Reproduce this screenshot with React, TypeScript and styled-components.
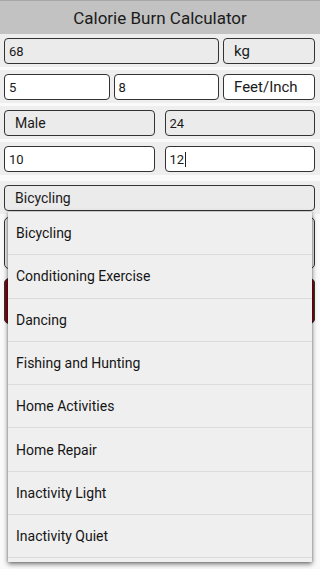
import React from "react";
import styled, { createGlobalStyle } from "styled-components";

const Global = createGlobalStyle`
  html, body { margin: 0; padding: 0; background: #fafafa; }
  body { font-family: Roboto, "Noto Sans", Arial, sans-serif; width: 320px; height: 569px; overflow: hidden; }
  * { box-sizing: border-box; }
`;

const Page = styled.div`
  position: relative;
  width: 320px;
  height: 569px;
  background: #fafafa;
  overflow: hidden;
`;

const Header = styled.div`
  height: 34px;
  background: #c2c2c2;
  border-top: 1px solid #a8a8a8;
  display: flex;
  align-items: center;
  justify-content: center;
  font-size: 17px;
  color: #1a1a1a;
`;

const Row = styled.div<{ $cols: string; $gap: number; $mt?: number }>`
  display: grid;
  grid-template-columns: ${(p) => p.$cols};
  column-gap: ${(p) => p.$gap}px;
  background: #eeeeee;
  padding: 4px 5px 3px 4px;
  margin-top: ${(p) => p.$mt ?? 3}px;
`;

const Field = styled.div<{ $filled?: boolean; $label?: boolean }>`
  height: 26px;
  border: 1.5px solid #333;
  border-radius: 4px;
  background: ${(p) => (p.$filled ? "#ebebeb" : "#ffffff")};
  display: flex;
  align-items: center;
  padding-left: ${(p) => (p.$label ? 10 : 4)}px;
  font-size: ${(p) => (p.$label ? 14 : 13)}px;
  color: #1a1a1a;
  white-space: nowrap;
`;

const Unit = styled(Field)`
  font-size: 15px;
`;

const Caret = styled.span`
  display: inline-block;
  width: 1px;
  height: 15px;
  background: #222;
  margin-left: 1px;
`;

const HiddenBox = styled.div`
  margin: 3px 5px 0 4px;
  height: 52px;
  border: 1.5px solid #333;
  border-radius: 5px;
  background: #eeeeee;
`;

const RedButton = styled.div`
  margin: 9px 5px 0 4px;
  height: 46px;
  border-radius: 5px;
  background: #7a0a12;
  border: 1.5px solid #333;
`;

const Dropdown = styled.div`
  position: absolute;
  left: 8px;
  top: 212px;
  width: 304px;
  height: 350px;
  background: #efefef;
  box-shadow: 0 2px 5px rgba(0, 0, 0, 0.55), 0 0 2px rgba(0, 0, 0, 0.25);
  overflow: hidden;
`;

const Item = styled.div`
  height: 43.3px;
  display: flex;
  align-items: center;
  padding-left: 8px;
  font-size: 14px;
  color: #151515;
  border-bottom: 1px solid #dcdcdc;
`;

const items = [
  "Bicycling",
  "Conditioning Exercise",
  "Dancing",
  "Fishing and Hunting",
  "Home Activities",
  "Home Repair",
  "Inactivity Light",
  "Inactivity Quiet",
];

export default function App() {
  return (
    <Page>
      <Global />
      <Header>Calorie Burn Calculator</Header>
      <Row $cols="1fr 92px" $gap={4} $mt={0}>
        <Field $filled>68</Field>
        <Unit $filled $label>kg</Unit>
      </Row>
      <Row $cols="1fr 1fr 92px" $gap={4}>
        <Field>5</Field>
        <Field>8</Field>
        <Unit $label>Feet/Inch</Unit>
      </Row>
      <Row $cols="1fr 1fr" $gap={10}>
        <Field $filled $label>Male</Field>
        <Field $filled>24</Field>
      </Row>
      <Row $cols="1fr 1fr" $gap={10}>
        <Field>10</Field>
        <Field>
          12<Caret />
        </Field>
      </Row>
      <Row $cols="1fr" $gap={0} $mt={6}>
        <Field $filled $label>Bicycling</Field>
      </Row>
      <HiddenBox />
      <RedButton />
      <Dropdown>
        {items.map((t) => (
          <Item key={t}>{t}</Item>
        ))}
        <Item />
      </Dropdown>
    </Page>
  );
}
